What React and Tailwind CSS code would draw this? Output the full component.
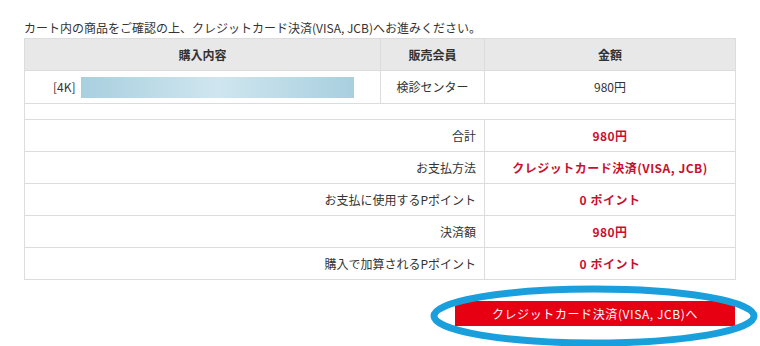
import React from "react";

const font = { fontFamily: '"Noto Sans CJK JP", "Noto Sans", sans-serif' };

export default function App() {
  const rows = [
    ["合計", "980円"],
    ["お支払方法", "クレジットカード決済(VISA, JCB)"],
    ["お支払に使用するPポイント", "0 ポイント"],
    ["決済額", "980円"],
    ["購入で加算されるPポイント", "0 ポイント"],
  ];
  return (
    <div
      className="relative w-[760px] h-[346px] overflow-hidden bg-white text-[#333] text-[12px]"
      style={font}
    >
      <div className="pl-[24px] pt-[18px]">
        <p className="h-[20px] leading-[20px] text-[12px] text-[#333]">
          カート内の商品をご確認の上、クレジットカード決済(VISA, JCB)へお進みください。
        </p>
        <table className="w-[711px] table-fixed border-collapse border border-[#dcdcdc]">
          <colgroup>
            <col className="w-[356px]" />
            <col className="w-[104px]" />
            <col className="w-[251px]" />
          </colgroup>
          <tbody>
            <tr className="h-[32px] bg-[#e8e8e8] font-bold">
              <td className="border border-[#dcdcdc] text-center">購入内容</td>
              <td className="border border-[#dcdcdc] text-center">販売会員</td>
              <td className="border border-[#dcdcdc] text-center">金額</td>
            </tr>
            <tr className="h-[33px]">
              <td className="border border-[#dcdcdc] pl-[28px]">
                <div className="flex items-center gap-[5px]">
                  <span>[4K]</span>
                  <div className="h-[21px] w-[273px] bg-gradient-to-r from-[#a9cfdf] via-[#cfe6ef] to-[#a9cfdf]" />
                </div>
              </td>
              <td className="border border-[#dcdcdc] text-center">検診センター</td>
              <td className="border border-[#dcdcdc] text-center">980円</td>
            </tr>
            <tr className="h-[16px]">
              <td colSpan={3} className="border border-[#dcdcdc]" />
            </tr>
            {rows.map(([k, v]) => (
              <tr key={k} className="h-[32px]">
                <td colSpan={2} className="border border-[#dcdcdc] text-right pr-[8px]">
                  {k}
                </td>
                <td className="border border-[#dcdcdc] text-center font-bold text-[#c8102e] tracking-[0.5px]">
                  {v}
                </td>
              </tr>
            ))}
          </tbody>
        </table>
        <div className="flex justify-end w-[711px] mt-[21px]">
          <div className="w-[280px] h-[25px] bg-[#e60012] text-white text-[12px] tracking-[0.6px] flex items-center justify-center">
            クレジットカード決済(VISA, JCB)へ
          </div>
        </div>
      </div>
      <svg
        className="absolute left-0 top-0 pointer-events-none"
        width="760"
        height="346"
        viewBox="0 0 760 346"
      >
        <ellipse
          cx="594"
          cy="316"
          rx="160"
          ry="27"
          fill="none"
          stroke="#1a9fdd"
          strokeWidth="7"
        />
      </svg>
    </div>
  );
}
